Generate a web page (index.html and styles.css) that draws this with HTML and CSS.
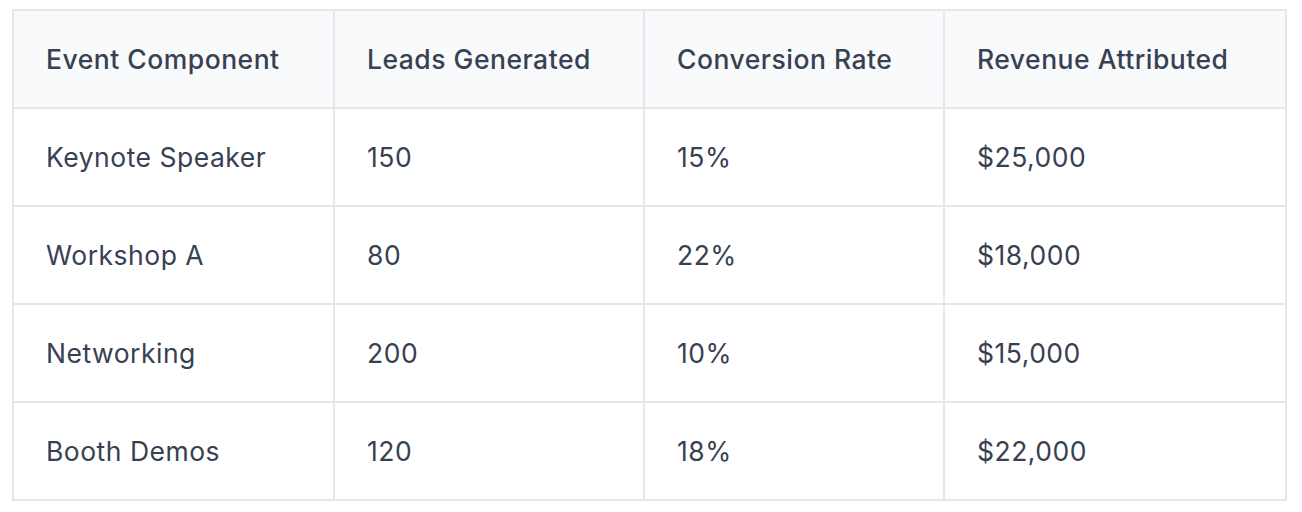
FILE: index.html
```html
<!DOCTYPE html>
<html>
<head>
<meta charset="utf-8">
<link rel="stylesheet" href="styles.css">
</head>
<body>
<div class="wrap">
<table class="data">
<colgroup>
<col class="c1"><col class="c2"><col class="c3"><col class="c4">
</colgroup>
<thead>
<tr><th>Event Component</th><th>Leads Generated</th><th>Conversion Rate</th><th>Revenue Attributed</th></tr>
</thead>
<tbody>
<tr><td>Keynote Speaker</td><td>150</td><td>15%</td><td>$25,000</td></tr>
<tr><td>Workshop A</td><td>80</td><td>22%</td><td>$18,000</td></tr>
<tr><td>Networking</td><td>200</td><td>10%</td><td>$15,000</td></tr>
<tr><td>Booth Demos</td><td>120</td><td>18%</td><td>$22,000</td></tr>
</tbody>
</table>
</div>
</body>
</html>
```
FILE: styles.css
```css
html, body { margin: 0; padding: 0; background: #ffffff; }
.wrap { padding: 9px 16px 0 12px; }
.data {
  width: 1273px;
  table-layout: fixed;
  border-collapse: collapse;
  font-family: Inter, "Noto Sans", sans-serif;
  font-size: 26.5px;
  letter-spacing: 0.5px;
  color: #374151;
}
.c1 { width: 321px; }
.c2 { width: 310px; }
.c3 { width: 300px; }
.c4 { width: 342px; }
.data th, .data td {
  border: 2px solid #e5e7eb;
  height: 98px;
  box-sizing: border-box;
  padding: 0 32px;
  text-align: left;
  vertical-align: middle;
  white-space: nowrap;
}
.data th { background: #f9fafb; font-weight: 500; }
.data td { font-weight: 400; }
```
